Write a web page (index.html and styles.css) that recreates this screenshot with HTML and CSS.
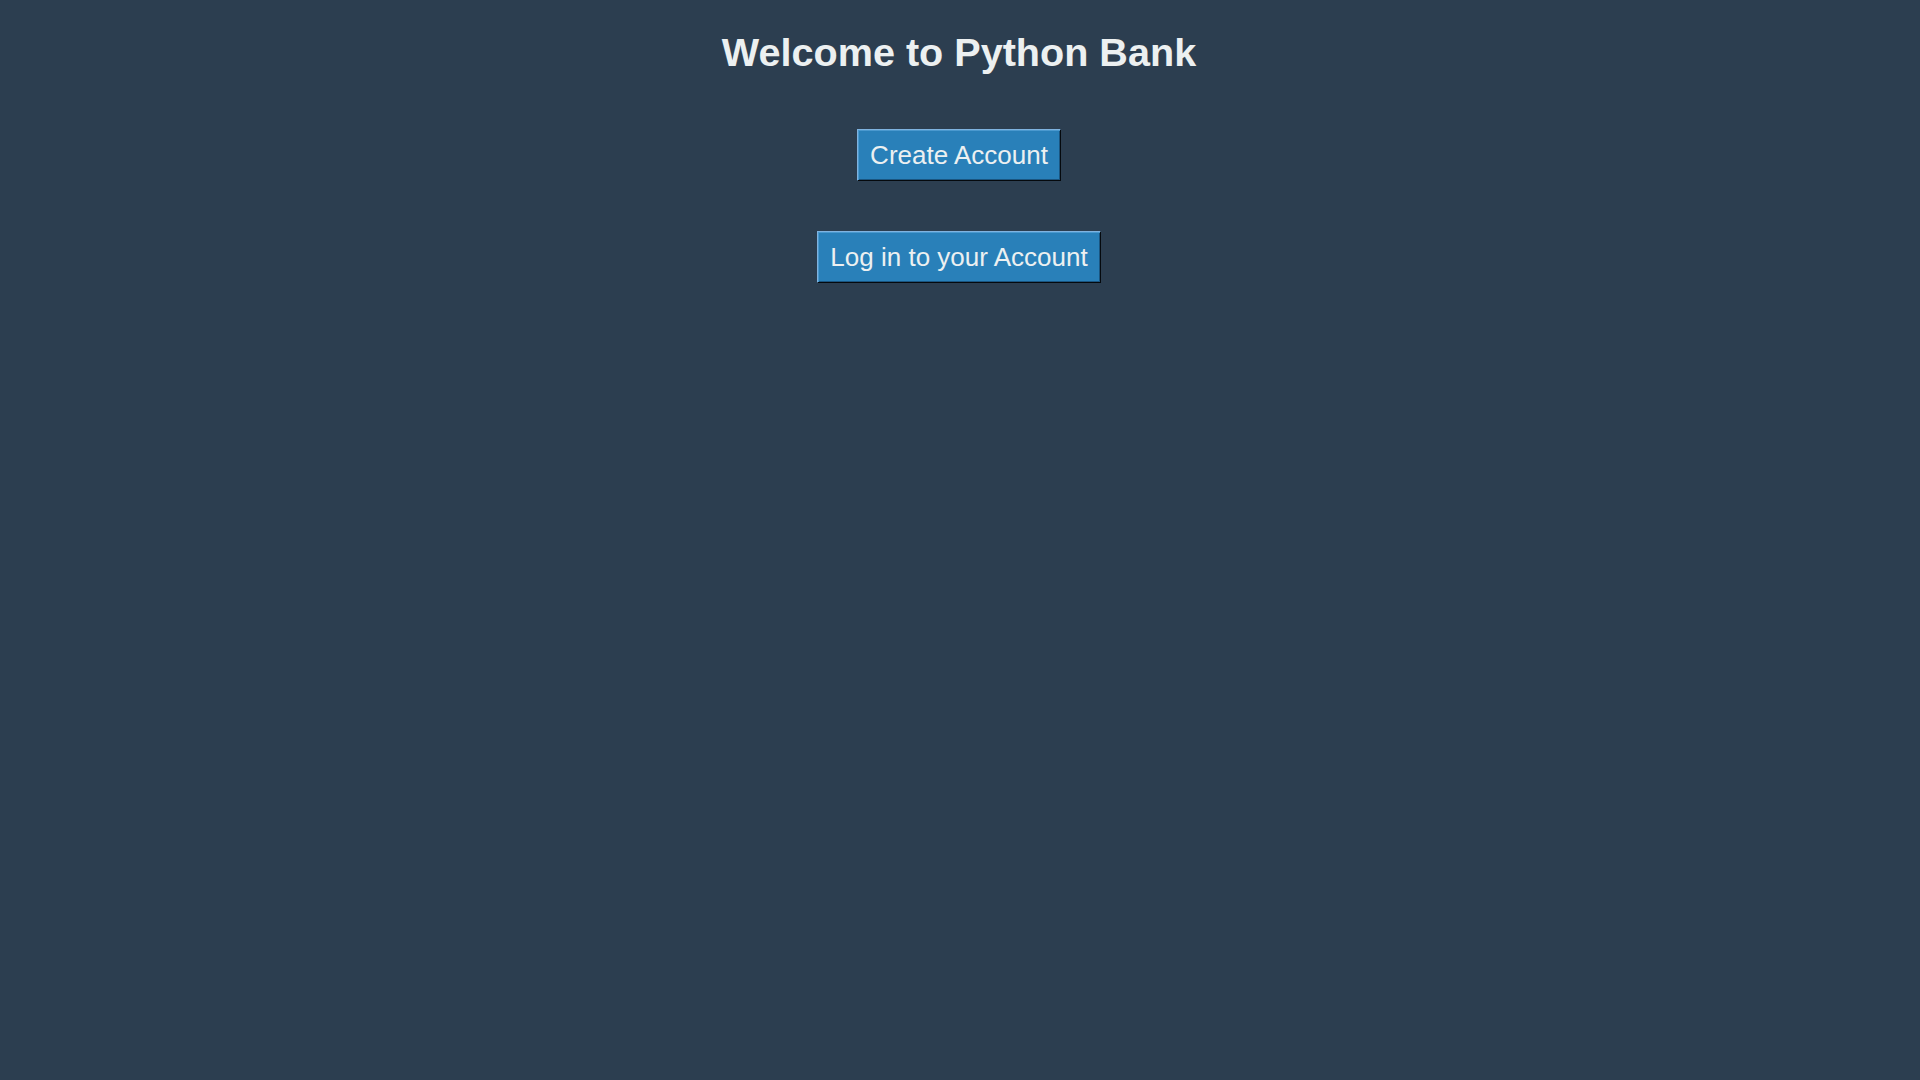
FILE: index.html
```html
<!DOCTYPE html>
<html lang="en">
<head>
<meta charset="utf-8">
<title>Python Bank</title>
<link rel="stylesheet" href="styles.css">
</head>
<body>
<main class="app">
  <h1 class="title">Welcome to Python Bank</h1>
  <button class="btn btn-create" type="button">Create Account</button>
  <button class="btn btn-login" type="button">Log in to your Account</button>
</main>
</body>
</html>
```

FILE: styles.css
```css
html, body {
  margin: 0;
  padding: 0;
  height: 100%;
  background: #2c3e50;
}

.app {
  display: flex;
  flex-direction: column;
  align-items: center;
  min-height: 100vh;
  padding-right: 2px;
  box-sizing: border-box;
  font-family: "Liberation Sans", Arial, sans-serif;
  color: #ecf0f1;
}

.title {
  margin: 29px 0 0;
  font-size: 39.6px;
  line-height: 46px;
  font-weight: bold;
  color: #ecf0f1;
}

.btn {
  font-family: "Liberation Sans", Arial, sans-serif;
  font-size: 26px;
  line-height: 30px;
  color: #ecf0f1;
  background: #2980b9;
  padding: 10px 12px;
  border: 1px solid;
  border-color: #7fb3e0 #05090d #05090d #7fb3e0;
  box-shadow: inset 1px 1px 0 #4a99cf, inset -1px -1px 0 #1a5580;
  border-radius: 0;
  cursor: pointer;
}

.btn-create {
  margin-top: 54px;
}

.btn-login {
  margin-top: 50px;
}
```
